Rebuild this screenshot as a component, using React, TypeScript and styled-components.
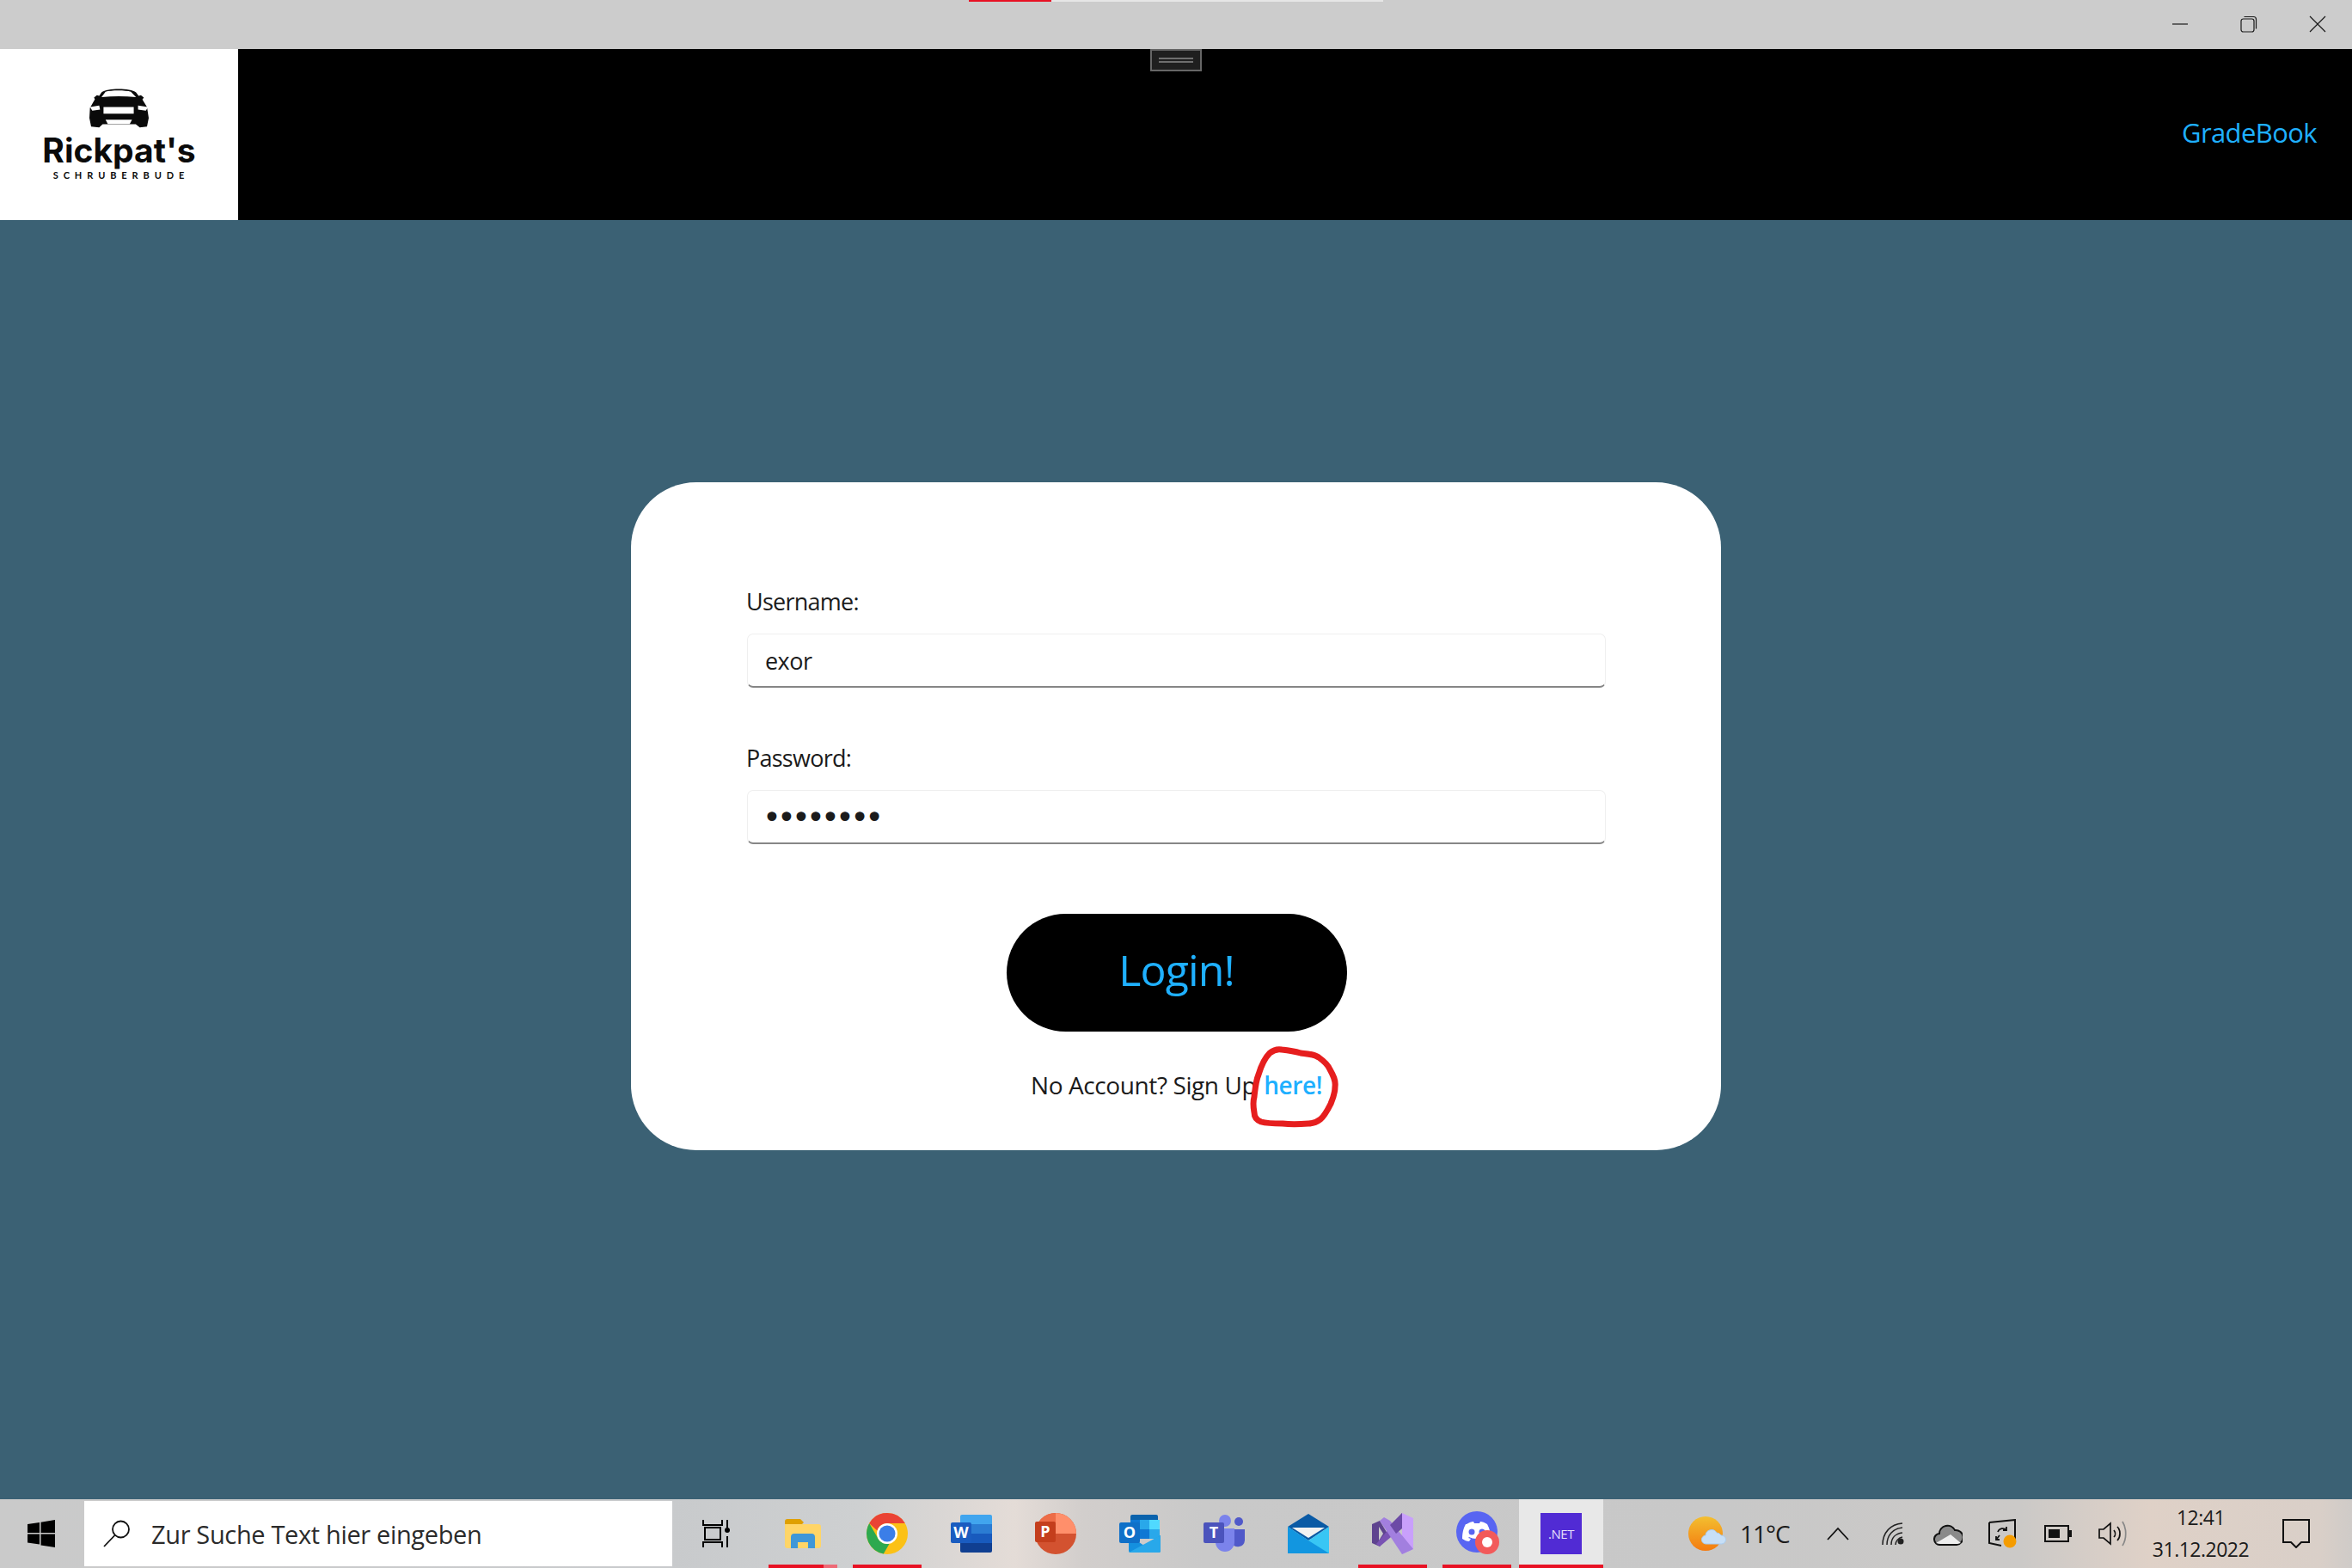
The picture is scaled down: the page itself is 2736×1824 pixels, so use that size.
import React from "react";
import styled, { createGlobalStyle } from "styled-components";

const GlobalStyle = createGlobalStyle`
  html, body {
    margin: 0;
    padding: 0;
    background: #3b6174;
  }
  * {
    box-sizing: border-box;
  }
`;

const uiFont = `"Open Sans", "Noto Sans", sans-serif`;
const blue = "#1fb0ff";

const Page = styled.div`
  width: 2736px;
  height: 1824px;
  display: flex;
  flex-direction: column;
  overflow: hidden;
  font-family: ${uiFont};
  color: #1b1b1b;
`;

const TitleBar = styled.div`
  position: relative;
  height: 57px;
  flex: none;
  background: #cccccc;
  display: flex;
  justify-content: flex-end;
`;

const LoadStrip = styled.div`
  position: absolute;
  top: 0;
  left: 1127px;
  width: 482px;
  height: 2px;
  background: linear-gradient(90deg, #e81123 0 96px, #e6e6e6 96px);
`;

const WindowButton = styled.div`
  width: 80px;
  height: 55px;
  display: flex;
  align-items: center;
  justify-content: center;
`;

const Header = styled.header`
  position: relative;
  height: 199px;
  flex: none;
  background: #000;
  display: flex;
  align-items: center;
  justify-content: space-between;
  padding-right: 41px;
`;

const LogoBox = styled.div`
  width: 277px;
  height: 199px;
  background: #fff;
  display: flex;
  flex-direction: column;
  align-items: center;
  padding-top: 46px;
  color: #0a0a0a;
`;

const LogoName = styled.div`
  font-family: Inter, sans-serif;
  font-weight: 700;
  font-size: 39px;
  line-height: 42px;
  letter-spacing: 0;
  margin-top: 5px;
`;

const LogoSub = styled.div`
  font-family: Lato, sans-serif;
  font-weight: 700;
  font-size: 11px;
  line-height: 12px;
  letter-spacing: 5.9px;
  margin-top: 2px;
  margin-right: -5px;
`;

const DockHandle = styled.div`
  position: absolute;
  top: 0;
  left: 1338px;
  width: 60px;
  height: 26px;
  background: #1f1f1f;
  border: 2px solid #666;
  display: flex;
  flex-direction: column;
  align-items: center;
  justify-content: center;
  gap: 2px;
`;

const HandleLine = styled.span`
  width: 40px;
  height: 2px;
  background: #6e6e6e;
`;

const NavLink = styled.a`
  color: ${blue};
  font-size: 31px;
  letter-spacing: -0.6px;
  line-height: 40px;
  margin-bottom: 6px;
`;

const Main = styled.main`
  flex: 1;
  background: #3b6174;
  padding-top: 305px;
`;

const Card = styled.form`
  position: relative;
  width: 1268px;
  height: 777px;
  margin: 0 auto;
  padding: 119px 134px 0 135px;
  background: #fff;
  border-radius: 76px;
`;

const Field = styled.div<{ $gap: number }>`
  margin-bottom: ${(p) => p.$gap}px;
`;

const Label = styled.label`
  display: block;
  font-size: 27px;
  line-height: 40px;
  letter-spacing: -0.75px;
  margin: 0 0 17px -1px;
`;

const Input = styled.input<{ $secret?: boolean }>`
  display: block;
  width: 100%;
  height: 63px;
  padding: ${(p) => (p.$secret ? "3px 0 0 17px" : "0 20px")};
  background: #fff;
  border: 1px solid #efefef;
  border-bottom: 2px solid #868686;
  border-radius: 7px;
  outline: none;
  color: #1b1b1b;
  font-family: ${(p) => (p.$secret ? `"DejaVu Sans", sans-serif` : uiFont)};
  font-size: ${(p) => (p.$secret ? 37 : 27)}px;
  letter-spacing: ${(p) => (p.$secret ? "-4.8px" : "-0.55px")};
`;

const LoginButton = styled.button`
  display: block;
  width: 396px;
  height: 137px;
  margin: 0 auto;
  padding: 0 0 7px;
  border: none;
  border-radius: 69px;
  background: #000;
  color: ${blue};
  font-family: ${uiFont};
  font-size: 50px;
  letter-spacing: -0.9px;
`;

const SignUpRow = styled.div`
  margin-top: 42px;
  text-align: center;
  font-size: 28px;
  line-height: 40px;
  letter-spacing: -0.4px;
`;

const SignUpLink = styled.a`
  color: ${blue};
  font-weight: 600;
  margin-left: 2px;
`;

const Scribble = styled.svg`
  position: absolute;
  left: 716px;
  top: 649px;
`;

const Taskbar = styled.footer`
  height: 80px;
  flex: none;
  display: flex;
  align-items: center;
  background: linear-gradient(
    90deg,
    #cacaca 0,
    #c8cacc 780px,
    #ced0d1 1000px,
    #e4dcd7 1180px,
    #d2cecc 1260px,
    #c9c9c9 1400px,
    #c8c8c8 2000px,
    #cbc9c7 2350px,
    #dfd1c7 2500px,
    #d9cfc8 2700px,
    #cfcbc8 2736px
  );
`;

const StartButton = styled.div`
  width: 98px;
  height: 80px;
  padding-left: 32px;
  flex: none;
  display: flex;
  align-items: center;
`;

const SearchBox = styled.div`
  width: 684px;
  height: 76px;
  flex: none;
  background: #fff;
  display: flex;
  align-items: center;
  gap: 24px;
  padding-left: 22px;
  font-size: 29px;
  letter-spacing: -0.35px;
  color: #2b2b2b;
`;

const TaskSlot = styled.div<{ $width?: number; $active?: boolean; $running?: boolean; $stacked?: boolean }>`
  position: relative;
  width: ${(p) => p.$width ?? 98}px;
  height: 80px;
  flex: none;
  display: flex;
  align-items: center;
  justify-content: center;
  background: ${(p) => (p.$active ? "#e8e8e8" : "transparent")};

  &::after {
    content: "";
    display: ${(p) => (p.$running ? "block" : "none")};
    position: absolute;
    left: ${(p) => (p.$active ? 0 : 9)}px;
    right: ${(p) => (p.$active ? 0 : 9)}px;
    bottom: 0;
    height: 4px;
    background: ${(p) =>
      p.$stacked ? "linear-gradient(90deg, #e81123 0 64px, #ee6a76 64px)" : "#e81123"};
  }
`;

const NetTile = styled.div`
  width: 48px;
  height: 48px;
  background: #512bd4;
  color: #e6e0fa;
  display: flex;
  align-items: center;
  justify-content: center;
  font-size: 15px;
  letter-spacing: -0.4px;
`;

const Tray = styled.div`
  margin-left: auto;
  display: flex;
  align-items: center;
`;

const Weather = styled.div`
  width: 142px;
  display: flex;
  align-items: center;
  gap: 16px;
  font-size: 28px;
  letter-spacing: -1px;
  color: #1b1b1b;
`;

const TrayIcon = styled.div`
  width: 64px;
  height: 80px;
  display: flex;
  align-items: center;
  justify-content: center;
`;

const Clock = styled.div`
  width: 140px;
  text-align: center;
  font-size: 23px;
  line-height: 37px;
  letter-spacing: -0.5px;
  color: #1b1b1b;
`;

const NotifySlot = styled.div`
  width: 106px;
  height: 80px;
  display: flex;
  align-items: center;
  padding-left: 25px;
`;

function Minimize() {
  return (
    <svg width="20" height="20" viewBox="0 0 20 20">
      <path d="M1 10h18" stroke="#1a1a1a" strokeWidth="1.2" />
    </svg>
  );
}

function Restore() {
  return (
    <svg width="20" height="20" viewBox="0 0 20 20" fill="none" stroke="#1a1a1a" strokeWidth="1.2">
      <rect x="1" y="4" width="15" height="15" rx="2.5" />
      <path d="M4.5 1.5h11a3 3 0 0 1 3 3v11" />
    </svg>
  );
}

function Close() {
  return (
    <svg width="20" height="20" viewBox="0 0 20 20">
      <path d="M1 1l18 18M19 1L1 19" stroke="#1a1a1a" strokeWidth="1.2" />
    </svg>
  );
}

function CarLogo() {
  return (
    <svg width="69" height="46" viewBox="316 308 206 137">
      <path
        d="M335 345l-3-6 10-8 8 2 8-12c20-16 100-16 120 0l9 12 8-2 10 8-5 7 16 26 6 38-6 30-25 3-14-11H362l-12 11-28-3-6-30 2-35z"
        fill="#0a0a0a"
      />
      <path d="M358 338l14-19c18-6 70-6 88 0l18 19c-40-4-80-4-120 0z" fill="#fff" />
      <path d="M365 372h105v23H365zM318 372l32-5 3 14-27 4zM485 367l35 5-8 13-27-4zM372 416h92l-8 15h-76z" fill="#fff" />
    </svg>
  );
}

function WindowsLogo() {
  return (
    <svg width="32" height="32" viewBox="0 0 32 32" fill="#000">
      <path d="M0 5l14-2v12H0zM15.500 2.800L32 0v15H15.500zM0 16.500h14v12L0 26.500zM15.500 16.500H32V32l-16.500-2.600z" />
    </svg>
  );
}

function SearchGlass() {
  return (
    <svg width="32" height="32" viewBox="0 0 32 32" fill="none" stroke="#111" strokeWidth="1.8">
      <circle cx="20.500" cy="11" r="9.500" />
      <path d="M13.500 18L1 31" />
    </svg>
  );
}

function TaskView() {
  return (
    <svg width="34" height="32" viewBox="0 0 34 32" fill="none" stroke="#000" strokeWidth="2">
      <path d="M1 0v6h22V0M3 9h18v14H3zM1 32v-6h22v6M29 0v9M29 19v13" />
      <circle cx="29" cy="12" r="3" fill="#000" stroke="none" />
    </svg>
  );
}

function FolderIcon() {
  return (
    <svg width="42" height="34" viewBox="0 0 42 34">
      <path d="M0 3a3 3 0 0 1 3-3h15l4 4-4 4H0z" fill="#dfa000" />
      <path d="M0 6h39a3 3 0 0 1 3 3v22a3 3 0 0 1-3 3H3a3 3 0 0 1-3-3z" fill="#ffd567" />
      <path d="M7 34V21a4 4 0 0 1 4-4h20a4 4 0 0 1 4 4v13h-8v-7H15v7z" fill="#3f97d8" />
    </svg>
  );
}

function ChromeIcon() {
  return (
    <svg width="48" height="48" viewBox="0 0 48 48">
      <circle cx="24" cy="24" r="24" fill="#fbc116" />
      <path d="M24 0a24 24 0 0 1 20.800 12H24a12 12 0 0 0-11.500 8.500L3.200 12A24 24 0 0 1 24 0z" fill="#ea4335" />
      <path d="M3.200 12l10.400 18a12 12 0 0 0 13 5.700L19.800 47.600A24 24 0 0 1 3.200 12z" fill="#2da94f" />
      <circle cx="24" cy="24" r="12" fill="#fff" />
      <circle cx="24" cy="24" r="9.500" fill="#3b7ee8" />
    </svg>
  );
}

function WordIcon() {
  return (
    <svg width="48" height="44" viewBox="0 0 48 44">
      <path d="M13 0h33a2 2 0 0 1 2 2v9.500H11V2a2 2 0 0 1 2-2z" fill="#41a5ee" />
      <rect x="11" y="11" width="37" height="11" fill="#2b7cd3" />
      <rect x="11" y="22" width="37" height="11" fill="#185abd" />
      <path d="M11 33h37v9a2 2 0 0 1-2 2H13a2 2 0 0 1-2-2z" fill="#103f91" />
      <rect x="0" y="9" width="24" height="24" rx="2" fill="#1a5cc0" />
      <text x="12" y="27" textAnchor="middle" fontFamily="Open Sans" fontWeight="700" fontSize="18" fill="#fff">
        W
      </text>
    </svg>
  );
}

function PowerPointIcon() {
  return (
    <svg width="48" height="48" viewBox="0 0 48 48">
      <circle cx="24" cy="24" r="24" fill="#d35230" />
      <path d="M24 0a24 24 0 0 1 24 24H24z" fill="#ff8f6b" />
      <path d="M24 0a24 24 0 0 0-24 24h24z" fill="#ed6c47" />
      <rect x="0" y="10" width="24" height="24" rx="2" fill="#c43e1c" />
      <text x="12" y="28" textAnchor="middle" fontFamily="Open Sans" fontWeight="700" fontSize="18" fill="#fff">
        P
      </text>
    </svg>
  );
}

function OutlookIcon() {
  return (
    <svg width="48" height="44" viewBox="0 0 48 44">
      <rect x="13" y="0" width="32" height="8" rx="2" fill="#0a62ac" />
      <rect x="13" y="6" width="11" height="11" fill="#0f78d4" />
      <rect x="24" y="6" width="11" height="11" fill="#29a8ea" />
      <rect x="35" y="6" width="12" height="11" fill="#50d9ff" />
      <rect x="13" y="17" width="11" height="11" fill="#0464b8" />
      <rect x="24" y="17" width="11" height="11" fill="#0f78d4" />
      <rect x="35" y="17" width="12" height="11" fill="#29a8ea" />
      <path d="M11 24l18 12 19-12v18a2 2 0 0 1-2 2H13a2 2 0 0 1-2-2z" fill="#1490df" />
      <path d="M11 44l37-20v18a2 2 0 0 1-2 2z" fill="#28a8ea" />
      <rect x="0" y="9" width="24" height="24" rx="2" fill="#0f70c8" />
      <text x="12" y="27" textAnchor="middle" fontFamily="Open Sans" fontWeight="700" fontSize="18" fill="#fff">
        O
      </text>
    </svg>
  );
}

function TeamsIcon() {
  return (
    <svg width="48" height="44" viewBox="0 0 48 44">
      <circle cx="41" cy="8" r="5" fill="#5059c9" />
      <path d="M33 17h15v13a8 8 0 0 1-15 3z" fill="#5059c9" />
      <circle cx="25" cy="7" r="7" fill="#7b83eb" />
      <path d="M14 16h22v16a11 11 0 0 1-22 0z" fill="#7b83eb" />
      <rect x="0" y="9" width="24" height="24" rx="2" fill="#4b53bc" />
      <text x="12" y="27" textAnchor="middle" fontFamily="Open Sans" fontWeight="700" fontSize="18" fill="#fff">
        T
      </text>
    </svg>
  );
}

function MailIcon() {
  return (
    <svg width="48" height="46" viewBox="0 0 48 46">
      <path d="M0 15L24 0l24 15-24 16z" fill="#0a5aa5" />
      <path d="M5 16h38L24 28z" fill="#f2f2f2" />
      <path d="M0 15l24 16 24-16v31H0z" fill="#38c6f4" />
      <path d="M0 46V15l24 16 24 15z" fill="#1296e0" />
    </svg>
  );
}

function VisualStudioIcon() {
  return (
    <svg width="48" height="48" viewBox="0 0 48 48">
      <path d="M0 13l9-4 9 15-9 15-9-4z" fill="#5e438f" />
      <path d="M8 16v16l5-8z" fill="#cccccc" />
      <path d="M35 0l13 6v36l-13 6z" fill="#c9a0fb" />
      <path d="M35 0v16L22 28 9 39 5 36z" fill="#7952b3" />
      <path d="M9 9l26 39 13-6L21 9 14 5z" fill="#a27fdf" />
      <path d="M35 0L21 14l7 10 7-6z" fill="#6c4ba6" />
    </svg>
  );
}

function DiscordIcon() {
  return (
    <svg width="56" height="52" viewBox="-4 0 56 52">
      <circle cx="24" cy="24" r="24" fill="#5865f2" />
      <path
        d="M12 15c3-2 6-3 8-3l1 2h6l1-2c2 0 5 1 8 3 3 5 4 11 4 17-3 2-5 3-8 3l-2-3 3-1-1-1c-6 2.500-12 2.500-17 0l-1 1 3 1-2 3c-3 0-5-1-8-3 0-6 1-12 4-17z"
        fill="#fff"
      />
      <circle cx="18" cy="24" r="3.500" fill="#5865f2" />
      <circle cx="30" cy="24" r="3.500" fill="#5865f2" />
      <circle cx="36" cy="36" r="14" fill="#f25a5a" />
      <circle cx="36" cy="36" r="6" fill="#fff" />
    </svg>
  );
}

function WeatherIcon() {
  return (
    <svg width="44" height="42" viewBox="0 0 44 42">
      <defs>
        <linearGradient id="sun" x1="0" y1="0" x2="0" y2="1">
          <stop offset="0" stopColor="#f3bf30" />
          <stop offset="1" stopColor="#f47b10" />
        </linearGradient>
      </defs>
      <circle cx="20" cy="21" r="20" fill="url(#sun)" />
      <path
        d="M21 33a5 5 0 0 1-1-10 7 7 0 0 1 13-3 6 6 0 0 1 5 3 5 5 0 0 1 1 10z"
        fill="#c7dff7"
        stroke="#a9cdf0"
      />
    </svg>
  );
}

function Chevron() {
  return (
    <svg width="26" height="16" viewBox="0 0 26 16" fill="none" stroke="#111" strokeWidth="1.8">
      <path d="M1 15L13 2l12 13" />
    </svg>
  );
}

function WifiIcon() {
  return (
    <svg width="26" height="26" viewBox="0 0 26 26" fill="none" stroke="#222" strokeWidth="1.500">
      <path d="M1 26C1 12 10 2 24 1" />
      <path d="M6 26C6 15 13 7 24 6" />
      <path d="M11 26c0-8 5-13 13-14" />
      <path d="M16 26c0-4 3-8 8-9" />
      <circle cx="22" cy="22" r="3.500" fill="#222" stroke="none" />
    </svg>
  );
}

function CloudIcon() {
  return (
    <svg width="34" height="28" viewBox="0 0 34 28">
      <path d="M8 27a6.500 6.500 0 0 1-1-13A9.500 9.500 0 0 1 25 10a6.500 6.500 0 0 1 2 17z" fill="#8a8a8a" stroke="#111" strokeWidth="2" />
      <path d="M3 25L20 15l12 10-4 1H8z" fill="#eee" />
    </svg>
  );
}

function SyncMonitor() {
  return (
    <svg width="34" height="34" viewBox="0 0 34 34" fill="none">
      <path d="M1 4l30-3v23M1 4v24l14 3" stroke="#111" strokeWidth="2" />
      <path d="M11 15a6 6 0 0 1 10-2m0-4v4h-4M9 24l4-5m-4 1v4h4" stroke="#111" strokeWidth="1.800" />
      <circle cx="25" cy="26" r="7.500" fill="#f59c00" />
    </svg>
  );
}

function Battery() {
  return (
    <svg width="32" height="20" viewBox="0 0 32 20">
      <rect x="1" y="1" width="27" height="18" fill="none" stroke="#111" strokeWidth="2" />
      <rect x="5" y="5" width="13" height="10" fill="#111" />
      <rect x="29" y="6" width="3" height="8" fill="#111" />
    </svg>
  );
}

function Speaker() {
  return (
    <svg width="34" height="30" viewBox="0 0 34 30" fill="none" stroke="#111" strokeWidth="1.700">
      <path d="M1 10h5l8-7v24l-8-7H1z" />
      <path d="M18 11c2 2.500 2 6 0 8M22 7c4 4 4 12 0 16" />
      <path d="M28 1c5 8 5 20 0 28" stroke="#888" />
    </svg>
  );
}

function NotifyIcon() {
  return (
    <svg width="32" height="34" viewBox="0 0 32 34" fill="none" stroke="#111" strokeWidth="2">
      <path d="M1 1h30v26h-9l-6 6-6-6H1z" />
    </svg>
  );
}

const apps = [
  { key: "folder", icon: <FolderIcon />, running: true, stacked: true },
  { key: "chrome", icon: <ChromeIcon />, running: true },
  { key: "word", icon: <WordIcon /> },
  { key: "ppt", icon: <PowerPointIcon /> },
  { key: "outlook", icon: <OutlookIcon /> },
  { key: "teams", icon: <TeamsIcon /> },
  { key: "mail", icon: <MailIcon /> },
  { key: "vs", icon: <VisualStudioIcon />, running: true },
  { key: "discord", icon: <DiscordIcon />, running: true },
];

export default function App() {
  return (
    <Page>
      <GlobalStyle />
      <TitleBar>
        <LoadStrip />
        <WindowButton>
          <Minimize />
        </WindowButton>
        <WindowButton>
          <Restore />
        </WindowButton>
        <WindowButton>
          <Close />
        </WindowButton>
      </TitleBar>
      <Header>
        <LogoBox>
          <CarLogo />
          <LogoName>Rickpat's</LogoName>
          <LogoSub>SCHRUBERBUDE</LogoSub>
        </LogoBox>
        <DockHandle>
          <HandleLine />
          <HandleLine />
        </DockHandle>
        <NavLink>GradeBook</NavLink>
      </Header>
      <Main>
        <Card>
          <Field $gap={62}>
            <Label>Username:</Label>
            <Input type="text" value="exor" readOnly />
          </Field>
          <Field $gap={81}>
            <Label>Password:</Label>
            <Input $secret type="password" value="password" readOnly />
          </Field>
          <LoginButton type="button">Login!</LoginButton>
          <SignUpRow>
            No Account? Sign Up <SignUpLink>here!</SignUpLink>
          </SignUpRow>
          <Scribble width="115" height="110" viewBox="0 0 115 110" fill="none">
            <path
              d="M27 15C32 11 36 10 41 11C50 12 56 13 63 15C72 16 78 16 84 20C91 25 95 29 97 34C101 41 104 47 103 54C103 61 101 67 98 74C94 82 91 88 86 92C81 96 78 97 72 97C60 98 50 98 42 97C32 97 24 97 17 95C12 93 9 90 9 84C8 78 7 73 9 66C10 56 11 47 14 40C17 30 21 21 27 15Z"
              stroke="#e61e1e"
              strokeWidth="7"
            />
          </Scribble>
        </Card>
      </Main>
      <Taskbar>
        <StartButton>
          <WindowsLogo />
        </StartButton>
        <SearchBox>
          <SearchGlass />
          Zur Suche Text hier eingeben
        </SearchBox>
        <TaskSlot $width={103}>
          <TaskView />
        </TaskSlot>
        {apps.map((app) => (
          <TaskSlot key={app.key} $running={app.running} $stacked={app.stacked}>
            {app.icon}
          </TaskSlot>
        ))}
        <TaskSlot $active $running>
          <NetTile>.NET</NetTile>
        </TaskSlot>
        <Tray>
          <Weather>
            <WeatherIcon />
            11°C
          </Weather>
          <TrayIcon>
            <Chevron />
          </TrayIcon>
          <TrayIcon>
            <WifiIcon />
          </TrayIcon>
          <TrayIcon>
            <CloudIcon />
          </TrayIcon>
          <TrayIcon>
            <SyncMonitor />
          </TrayIcon>
          <TrayIcon>
            <Battery />
          </TrayIcon>
          <TrayIcon>
            <Speaker />
          </TrayIcon>
          <Clock>
            12:41
            <br />
            31.12.2022
          </Clock>
          <NotifySlot>
            <NotifyIcon />
          </NotifySlot>
        </Tray>
      </Taskbar>
    </Page>
  );
}
